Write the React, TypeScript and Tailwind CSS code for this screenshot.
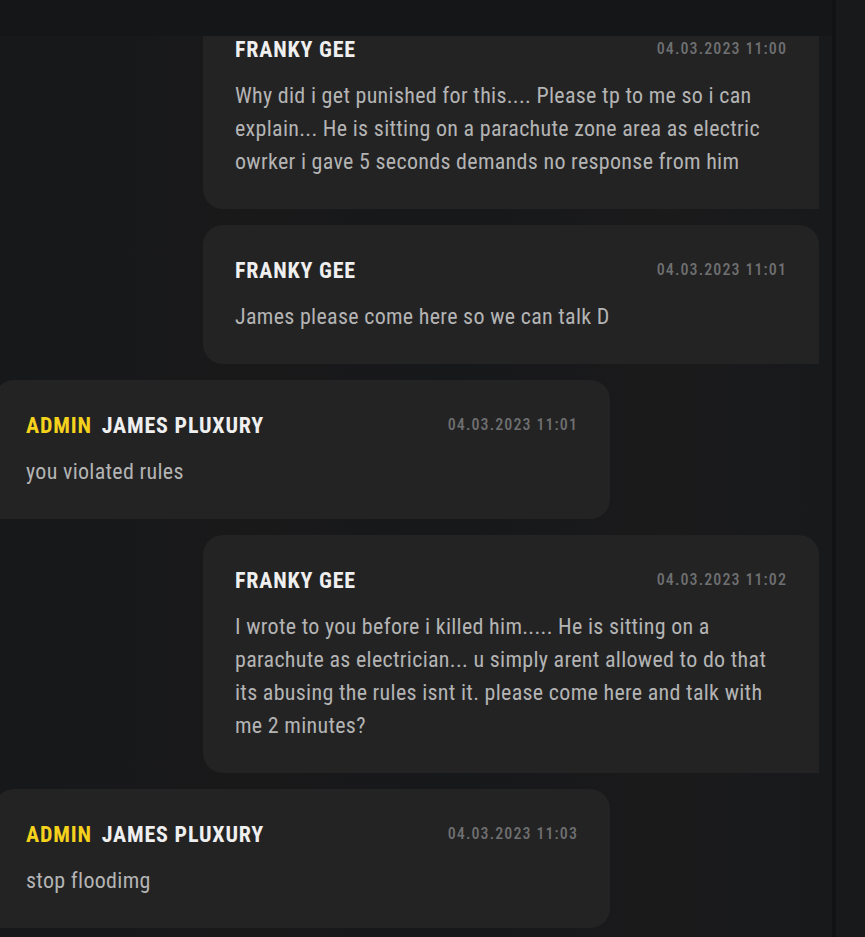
import React from "react";

type Message = {
  id: number;
  admin?: boolean;
  name: string;
  time: string;
  text: string;
};

const messages: Message[] = [
  {
    id: 1,
    name: "Franky Gee",
    time: "04.03.2023 11:00",
    text: "Why did i get punished for this.... Please tp to me so i can explain... He is sitting on a parachute zone area as electric owrker i gave 5 seconds demands no response from him",
  },
  { id: 2, name: "Franky Gee", time: "04.03.2023 11:01", text: "James please come here so we can talk D" },
  { id: 3, admin: true, name: "James Pluxury", time: "04.03.2023 11:01", text: "you violated rules" },
  {
    id: 4,
    name: "Franky Gee",
    time: "04.03.2023 11:02",
    text: "I wrote to you before i killed him..... He is sitting on a parachute as electrician... u simply arent allowed to do that its abusing the rules isnt it. please come here and talk with me 2 minutes?",
  },
  { id: 5, admin: true, name: "James Pluxury", time: "04.03.2023 11:03", text: "stop floodimg" },
];

const Bubble = ({ msg }: { msg: Message }) => {
  const mine = !msg.admin;
  return (
    <div
      className={
        "w-[616px] bg-[#232324] px-8 pt-[31px] pb-[31px] " +
        (mine ? "self-end rounded-[20px] rounded-br-none" : "self-start rounded-[20px] rounded-bl-none")
      }
    >
      <div className="flex items-center justify-between h-[28px]">
        <div className="flex items-center gap-[10px] text-[22px] font-bold uppercase tracking-[0.8px]">
          {msg.admin && <span className="text-[#f5d21c]">Admin</span>}
          <span className="text-[#efefef]">{msg.name}</span>
        </div>
        <span className="text-[16px] font-medium tracking-[1.1px] text-[#6f7071]">{msg.time}</span>
      </div>
      <p className="mt-4 text-[22px] leading-[33px] tracking-[0.3px] text-[#b4b4b4]">{msg.text}</p>
    </div>
  );
};

export default function App() {
  return (
    <div className="flex h-[937px] w-full overflow-hidden bg-[#18191b] font-['Roboto',sans-serif] [font-stretch:75%]">
      <div className="flex w-[832px] flex-col">
        <div className="h-9 shrink-0 bg-[#151617]" />
        <div className="min-h-0 flex-1 overflow-hidden bg-[linear-gradient(90deg,#17181a_0%,#19191a_30%,#17181a_55%,#1a1a1b_80%,#18191b_100%)]">
          <div className="-mt-[32px] ml-[-6px] flex w-[825px] flex-col gap-4">
            {messages.map((m) => (
              <Bubble key={m.id} msg={m} />
            ))}
          </div>
        </div>
      </div>
      <div className="w-1 shrink-0 bg-[#111213]" />
      <div className="flex-1 bg-[#18191b]" />
    </div>
  );
}
